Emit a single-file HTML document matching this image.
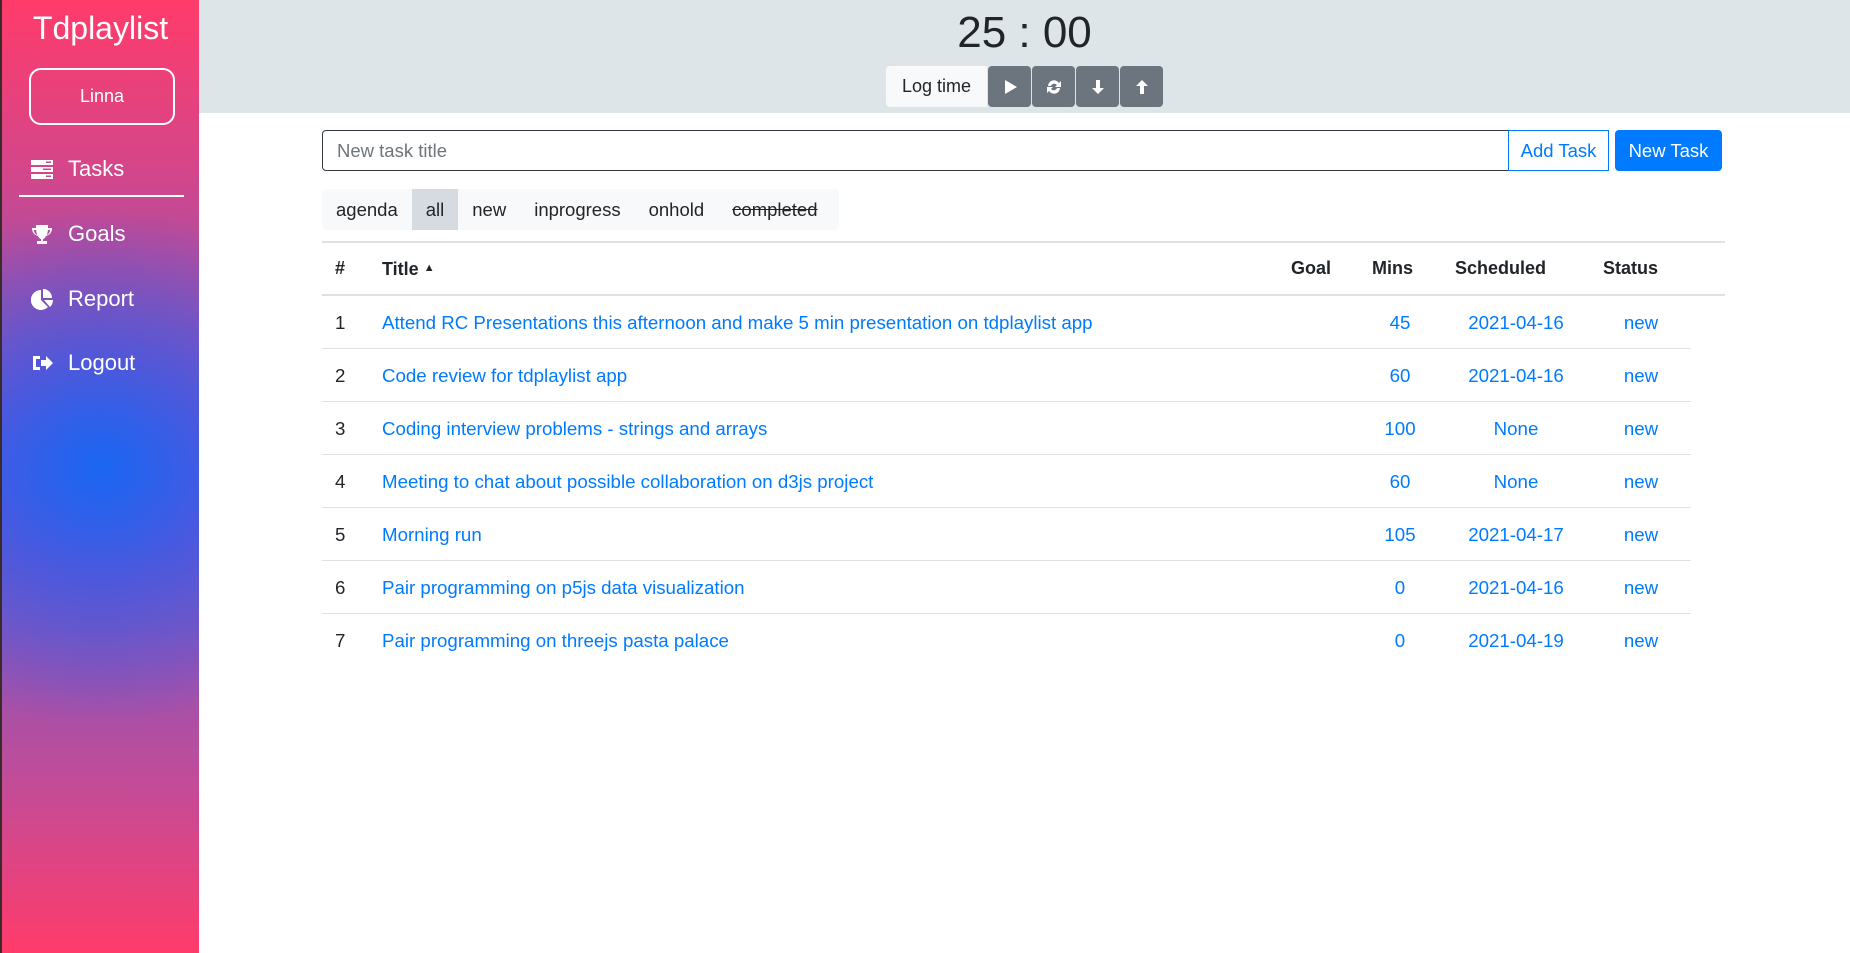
<!DOCTYPE html>
<html><head><meta charset="utf-8"><style>
*{box-sizing:border-box;margin:0;padding:0}
body{width:1850px;height:953px;overflow:hidden;font-family:"Liberation Sans",sans-serif;background:#fff;color:#212529;position:relative}
#side{position:absolute;left:0;top:0;width:199px;height:953px;border-left:2px solid #3a2a2a;
background:radial-gradient(circle at 98px 467px,#1a66f2 0px,rgba(40,90,240,.6) 110px,rgba(90,90,220,0) 260px),
linear-gradient(#ff3b6a 0%,#d4468a 18%,#a150a8 32%,#6a5bd0 50%,#8a55b8 65%,#c24c98 82%,#ff3b6a 100%)}
#side .t{position:absolute;top:10px;left:0;width:197px;text-align:center;color:#fff;font-size:32px}
#side .u{position:absolute;left:27px;top:68px;width:146px;height:57px;border:2px solid #fff;border-radius:12px;color:#fff;font-size:18px;text-align:center;line-height:53px}
.nav{position:absolute;left:29px;color:#fff;font-size:22px;display:flex;align-items:center}
.nav svg{width:22px;height:22px;margin-right:15px;fill:#fff}
#hdr{position:absolute;left:199px;top:0;right:0;height:113px;background:#dee5e9}
#timer{position:absolute;left:0;right:0;top:8px;text-align:center;font-size:44px;color:#212529}
#btns{position:absolute;top:66px;left:687px;display:flex;height:41px}
#btns .l{width:101px;background:#f8f9fa;border-radius:4px 0 0 4px;font-size:18px;text-align:center;line-height:41px}
#btns .g{background:#6c757d;width:43px;margin-left:1px;display:flex;align-items:center;justify-content:center;border-radius:4px}
#btns .g:first-of-type{margin-left:0}
#btns svg{width:16px;height:16px;fill:#fff}
#inp{position:absolute;left:322px;top:130px;width:1187px;height:41px;border:1px solid #343a40;border-radius:4px 0 0 4px;font-size:18.5px;color:#6c757d;padding-left:14px;line-height:39px}
#add{position:absolute;left:1508px;top:130px;width:101px;height:41px;border:1px solid #007bff;color:#007bff;font-size:18.5px;text-align:center;line-height:39px}
#new{position:absolute;left:1615px;top:130px;width:107px;height:41px;background:#007bff;color:#fff;border-radius:4px;font-size:18.5px;text-align:center;line-height:41px}
#flt{position:absolute;left:322px;top:189px;height:41px;width:517px;background:#f8f9fa;border-radius:4px;display:flex;font-size:18.5px}
#flt span{padding:0 14px;line-height:41px}
#flt .a{background:#d6dbe1}
.row{position:absolute;left:322px;height:53px;font-size:18.7px;line-height:53px}
.row div{position:absolute;top:0}
.h{font-weight:bold;width:1403px;border-top:2px solid #dee2e6;border-bottom:2px solid #dee2e6;top:241px;height:55px;line-height:51px;font-size:18px}
.d{width:1369px;border-bottom:1px solid #dee2e6}
.d div{color:#007bff}
.d .n{color:#212529}
.c1{left:13px}.c2{left:60px}.c4{left:1050px;width:56px;text-align:center}.c5{left:1120px;width:148px;text-align:center}.c6{left:1280px;width:78px;text-align:center}
</style></head><body>
<div id="side">
<div class="t">Tdplaylist</div>
<div class="u">Linna</div>
<div class="nav" style="top:156px"><svg viewBox="0 0 22 22"><rect x="0" y="2" width="22" height="5"/><rect x="0" y="9" width="22" height="5"/><rect x="0" y="16" width="22" height="5"/><rect x="15" y="3.5" width="5" height="1.5" fill="#c04a98"/><rect x="12" y="10.5" width="8" height="1.5" fill="#c04a98"/><rect x="15" y="17.5" width="5" height="1.5" fill="#c04a98"/></svg>Tasks</div>
<div style="position:absolute;left:17px;top:195px;width:165px;height:2px;background:#fff"></div>
<div class="nav" style="top:221px"><svg viewBox="0 0 22 22"><path d="M5 2h12v3h4c0 4-2 7-6 8-1 2-2 3-3 3v2h4v3H6v-3h4v-2c-1 0-2-1-3-3-4-1-6-4-6-8h4zM3 7c0 2 1 4 3 5L5 7zM19 7h-2l-1 5c2-1 3-3 3-5z"/></svg>Goals</div>
<div class="nav" style="top:286px"><svg viewBox="0 0 22 22"><path d="M10 2v10l7 7A10 10 0 1 1 10 2zM12 1a9 9 0 0 1 9 9h-9zM13 12h9a10 10 0 0 1-3 7z"/></svg>Report</div>
<div class="nav" style="top:350px"><svg viewBox="0 0 22 22"><path d="M2 4h7v3H5v8h4v3H2zM10 8h5V4l7 7-7 7v-4h-5z"/></svg>Logout</div>
</div>
<div id="hdr">
<div id="timer">25 : 00</div>
<div id="btns"><div class="l">Log time</div>
<div class="g"><svg viewBox="0 0 16 16"><path d="M3 1l12 7-12 7z"/></svg></div>
<div class="g"><svg viewBox="0 0 16 16"><path d="M2 7a6 6 0 0 1 11-3l2-2v6H9l2-2a3.5 3.5 0 0 0-6 1zM14 9a6 6 0 0 1-11 3l-2 2V8h6l-2 2a3.5 3.5 0 0 0 6-1z"/></svg></div>
<div class="g"><svg viewBox="0 0 16 16"><path d="M6 1h4v8h4l-6 6-6-6h4z"/></svg></div>
<div class="g"><svg viewBox="0 0 16 16"><path d="M6 15h4V7h4L8 1 2 7h4z"/></svg></div>
</div></div>
<div id="inp">New task title</div>
<div id="add">Add Task</div>
<div id="new">New Task</div>
<div id="flt"><span>agenda</span><span class="a">all</span><span>new</span><span>inprogress</span><span>onhold</span><span style="text-decoration:line-through">completed</span></div>
<div class="row h"><div class="c1">#</div><div class="c2">Title <span style="font-size:11px;vertical-align:4px">&#9650;</span></div><div style="left:969px">Goal</div><div style="left:1050px">Mins</div><div style="left:1133px">Scheduled</div><div style="left:1281px">Status</div></div>
<div class="row d" style="top:296px"><div class="c1 n">1</div><div class="c2">Attend RC Presentations this afternoon and make 5 min presentation on tdplaylist app</div><div class="c4">45</div><div class="c5">2021-04-16</div><div class="c6">new</div></div>
<div class="row d" style="top:349px"><div class="c1 n">2</div><div class="c2">Code review for tdplaylist app</div><div class="c4">60</div><div class="c5">2021-04-16</div><div class="c6">new</div></div>
<div class="row d" style="top:402px"><div class="c1 n">3</div><div class="c2">Coding interview problems - strings and arrays</div><div class="c4">100</div><div class="c5">None</div><div class="c6">new</div></div>
<div class="row d" style="top:455px"><div class="c1 n">4</div><div class="c2">Meeting to chat about possible collaboration on d3js project</div><div class="c4">60</div><div class="c5">None</div><div class="c6">new</div></div>
<div class="row d" style="top:508px"><div class="c1 n">5</div><div class="c2">Morning run</div><div class="c4">105</div><div class="c5">2021-04-17</div><div class="c6">new</div></div>
<div class="row d" style="top:561px"><div class="c1 n">6</div><div class="c2">Pair programming on p5js data visualization</div><div class="c4">0</div><div class="c5">2021-04-16</div><div class="c6">new</div></div>
<div class="row d" style="top:614px;border-bottom:none"><div class="c1 n">7</div><div class="c2">Pair programming on threejs pasta palace</div><div class="c4">0</div><div class="c5">2021-04-19</div><div class="c6">new</div></div>
</body></html>
